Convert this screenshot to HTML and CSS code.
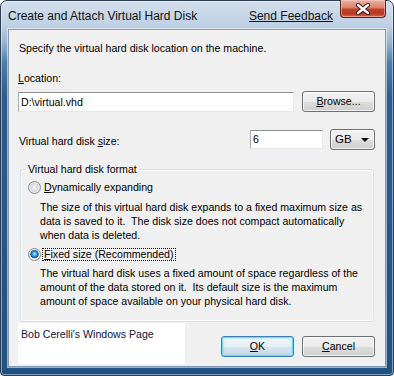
FILE: index.html
```html
<!DOCTYPE html>
<html>
    <head>
        <meta charset="utf-8">
        <title>Create and Attach Virtual Hard Disk</title>
        <link rel="stylesheet" href="styles.css">
    </head>
    <body>
        <div class="win">
            <header class="win-title">
                <span class="win-caption">Create and Attach Virtual Hard Disk</span>
                <a class="win-feedback" href="#">Send Feedback</a>
                <span class="win-close">
                    <svg width="16" height="12" viewBox="0 0 16 12">
                        <path d="M3 2 L13 10 M13 2 L3 10" stroke="#3a1510" stroke-width="4.2" stroke-linecap="round"/>
                        <path d="M3 2 L13 10 M13 2 L3 10" stroke="#fff" stroke-width="2.4" stroke-linecap="round"/>
                    </svg>
                </span>
            </header>

            <div class="win-client">
                <p class="vhd-intro">Specify the virtual hard disk location on the machine.</p>

                <label class="vhd-label"><u>L</u>ocation:</label>
                <div class="vhd-row">
                    <div class="vhd-input vhd-input-path">D:\virtual.vhd</div>
                    <button class="vhd-btn"><u>B</u>rowse...</button>
                </div>

                <div class="vhd-row vhd-row-size">
                    <span class="vhd-size-label">Virtual hard disk <u>s</u>ize:</span>
                    <div class="vhd-input vhd-input-size">6</div>
                    <div class="vhd-select">GB <span class="vhd-caret"></span></div>
                </div>

                <fieldset class="vhd-group">
                    <legend>Virtual hard disk format</legend>
                    <div class="vhd-option">
                        <span class="vhd-radio"></span>
                        <span class="vhd-option-text"><u>D</u>ynamically expanding</span>
                    </div>
                    <p class="vhd-desc">The size of this virtual hard disk expands to a fixed maximum size as<br>data is saved to it.&nbsp; The disk size does not compact automatically<br>when data is deleted.</p>
                    <div class="vhd-option vhd-option-second">
                        <span class="vhd-radio vhd-radio-on"></span>
                        <span class="vhd-option-text vhd-focus"><u>F</u>ixed size (Recommended)</span>
                    </div>
                    <p class="vhd-desc">The virtual hard disk uses a fixed amount of space regardless of the<br>amount of the data stored on it.&nbsp; Its default size is the maximum<br>amount of space available on your physical hard disk.</p>
                </fieldset>

                <div class="vhd-bottom">
                    <div class="vhd-note">Bob Cerelli's Windows Page</div>
                    <button class="vhd-btn vhd-btn-default"><u>O</u>K</button>
                    <button class="vhd-btn"><u>C</u>ancel</button>
                </div>
            </div>
        </div>
    </body>
</html>
```

FILE: styles.css
```css
* {
    box-sizing: border-box;
}
body {
    margin: 0;
    font-family: "Liberation Sans", Arial, sans-serif;
    font-size: 10.6px;
    line-height: 13px;
    color: #000;
}
.win {
    width: 394px;
    height: 376px;
    display: flex;
    flex-direction: column;
    border: 1px solid #2d3e52;
    border-radius: 7px 7px 4px 4px;
    padding: 0 7px 8px;
    background: linear-gradient(to bottom, #d3dfec 0, #bfd1e4 24px, #95b3d1 42px, #4c7dab 62px, #2b5d8f 95px, #1f5183 100%);
    box-shadow: inset 0 0 0 1px rgba(255, 255, 255, 0.45);
}
.win-title {
    height: 28px;
    display: flex;
    align-items: flex-start;
    flex-shrink: 0;
}
.win-caption {
    font-size: 12px;
    line-height: 14px;
    margin-top: 8px;
    color: #111;
}
.win-feedback {
    font-size: 12px;
    line-height: 14px;
    margin: 8px 0 0 auto;
    color: #111;
    text-decoration: underline;
}
.win-close {
    width: 46px;
    height: 18px;
    margin: -1px 0 0 7px;
    display: flex;
    align-items: center;
    justify-content: center;
    border: 1px solid #5e1f16;
    border-top: none;
    border-radius: 0 0 4px 4px;
    background: linear-gradient(to bottom, #eab3a6 0, #d9806c 45%, #c2402a 55%, #b93a24 80%, #d9674c 100%);
    box-shadow: inset 0 0 0 1px rgba(255, 210, 200, 0.5);
}
.win-client {
    flex: 1;
    min-height: 0;
    background: #f0f0f0;
    border: 1px solid #8399b2;
    box-shadow: 0 0 0 1px rgba(255, 255, 255, 0.55);
    padding: 12px 10px 0 9px;
    display: flex;
    flex-direction: column;
}
.vhd-intro {
    margin: 0 0 0 1px;
}
.vhd-label {
    display: block;
    margin-top: 17px;
}
.vhd-row {
    display: flex;
    align-items: center;
    margin-top: 6px;
    height: 21px;
}
.vhd-input {
    height: 20px;
    background: #fff;
    border: 1px solid #abadb3;
    border-top-color: #8e9096;
    border-right-color: #e3e9ef;
    border-bottom-color: #e3e9ef;
    padding: 3px 0 0 2px;
    white-space: nowrap;
}
.vhd-input-path {
    width: 276px;
}
.vhd-btn {
    font: inherit;
    color: #000;
    width: 73px;
    height: 21px;
    margin-left: 8px;
    padding: 0;
    border: 1px solid #707070;
    border-radius: 3px;
    background: linear-gradient(to bottom, #f2f2f2 0, #ebebeb 50%, #dddddd 51%, #cfcfcf 100%);
    box-shadow: inset 0 0 0 1px rgba(255, 255, 255, 0.7);
}
.vhd-row-size {
    margin-top: 17px;
}
.vhd-size-label {
    flex: 1;
    padding: 3px 0 0 1px;
}
.vhd-input-size {
    width: 73px;
    height: 19px;
    padding-top: 2px;
}
.vhd-select {
    width: 45px;
    height: 21px;
    margin-left: 7px;
    display: flex;
    align-items: center;
    padding: 0 5px 0 4px;
    font-size: 11.5px;
    border: 1px solid #707070;
    border-radius: 3px;
    background: linear-gradient(to bottom, #f2f2f2 0, #ebebeb 50%, #dddddd 51%, #cfcfcf 100%);
    box-shadow: inset 0 0 0 1px rgba(255, 255, 255, 0.7);
}
.vhd-caret {
    margin-left: auto;
    width: 0;
    height: 0;
    border-left: 4px solid transparent;
    border-right: 4px solid transparent;
    border-top: 4px solid #111;
}
.vhd-group {
    margin: 13px 1px 0 2px;
    padding: 0 8px 13px 7px;
    border: 1px solid #d5dfe5;
    border-radius: 3px;
    box-shadow: inset 0 0 0 1px #fff;
}
.vhd-group legend {
    padding: 0 2px;
    margin-left: -2px;
}
.vhd-option {
    display: flex;
    align-items: center;
    height: 13px;
    margin-top: 5px;
}
.vhd-option-second {
    margin-top: 6px;
}
.vhd-radio {
    width: 13px;
    height: 13px;
    border-radius: 50%;
    border: 1px solid #8b8b8b;
    background: radial-gradient(circle at 50% 50%, #f4f4f4 0, #dcdcdc 45%, #c9c9c9 70%, #e8e8e8 100%);
    box-shadow: inset 0 0 0 1px #f5f5f5;
}
.vhd-radio-on {
    background: radial-gradient(circle at 50% 45%, #c6f0ff 0, #47a8e6 22%, #176cc0 40%, #0d4f8f 48%, #e8e8e8 56%, #cfcfcf 80%, #ececec 100%);
}
.vhd-option-text {
    margin-left: 1px;
    padding: 0 1px;
    border: 1px dotted transparent;
    line-height: 11px;
}
.vhd-focus {
    border-color: #000;
}
.vhd-desc {
    margin: 6px 0 0 12px;
    line-height: 14px;
    white-space: nowrap;
}
.vhd-desc:last-child {
    margin-top: 5px;
}
.vhd-bottom {
    display: flex;
    align-items: flex-start;
    margin-top: 1px;
}
.vhd-note {
    width: 167px;
    height: 41px;
    background: #fff;
    padding: 5px 0 0 3px;
    color: #14143c;
    margin-right: 28px;
}
.vhd-bottom .vhd-btn {
    margin-top: 13px;
}
.vhd-btn-default {
    border-color: #3c7fb1;
    box-shadow: inset 0 0 0 1px #5fdcff, inset 0 0 2px 2px rgba(120, 220, 255, 0.35);
    background: linear-gradient(to bottom, #f0f6fa 0, #e6eff5 50%, #d7e4ee 51%, #c9d9e6 100%);
}
```
